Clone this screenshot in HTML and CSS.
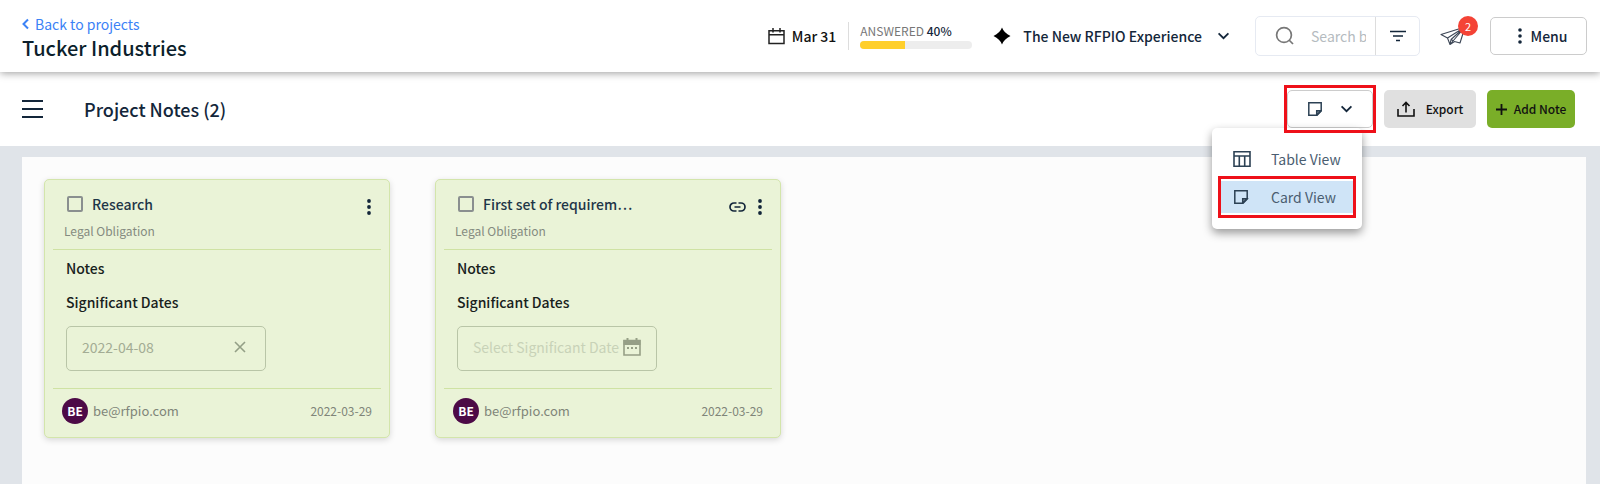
FILE: index.html
```html
<!DOCTYPE html>
<html lang="en">

<head>
    <meta charset="UTF-8">
    <meta name="viewport" content="width=device-width, initial-scale=1.0">
    <title>Tucker Industries - Project Notes</title>
    <link rel="stylesheet" href="styles.css">
</head>

<body>

    <header class="header">
        <div class="project">
            <a href="#" class="back-link">
                <svg width="8" height="12" viewBox="0 0 8 12"><path d="M6 1.5L1.5 6L6 10.5" fill="none" stroke="currentColor" stroke-width="2"/></svg>
                Back to projects
            </a>
            <h1>Tucker Industries</h1>
        </div>

        <div class="header-tools">
            <div class="due-date">
                <svg width="17" height="17" viewBox="0 0 17 17" fill="none" stroke="#222" stroke-width="1.5"><path d="M1 2.8H16V15.5H1ZM1 6.7H16M5 0V4.5M12 0V4.5"/></svg>
                Mar 31
            </div>

            <div class="progress">
                <div class="progress-label">ANSWERED <b>40%</b></div>
                <div class="progress-bar"><div class="progress-fill" style="width: 40%"></div></div>
            </div>

            <button class="experience">
                <svg width="18" height="18" viewBox="0 0 18 18"><path d="M9 0.5Q11 6 17.5 9Q11 12 9 17.5Q7 12 0.5 9Q7 6 9 0.5Z" fill="#000"/></svg>
                <span class="experience-name">The New RFPIO Experience</span>
                <svg width="13" height="8" viewBox="0 0 14 9"><path d="M1.5 1.5L7 7L12.5 1.5" fill="none" stroke="#13263a" stroke-width="2"/></svg>
            </button>

            <div class="search">
                <svg width="20" height="20" viewBox="0 0 20 20" fill="none" stroke="#777" stroke-width="1.7"><circle cx="9" cy="9" r="7.4"/><path d="M14 14L18 18"/></svg>
                <input type="text" placeholder="Search by keyword" aria-label="Search">
                <button class="filter" aria-label="Filter">
                    <svg width="16" height="12" viewBox="0 0 16 12" stroke="#13263a" stroke-width="1.6"><path d="M0 1.5H16M3 6H13M6 10.5H10"/></svg>
                </button>
            </div>

            <button class="inbox" aria-label="Inbox, 2 new">
                <svg width="26" height="20" viewBox="0 0 26 20" fill="none" stroke="#3c4656" stroke-width="1.1" stroke-linejoin="round"><path d="M1 8.5L25 1L20 17L14.5 15.5L10 18.5L7.5 12ZM7.5 12L25 1L10 18.5L11 13.5L14.5 15.5M11 13.5L25 1"/></svg>
                <span class="badge">2</span>
            </button>

            <button class="menu-button">
                <svg width="4" height="16" viewBox="0 0 4 16" fill="#13263a"><circle cx="2" cy="2" r="1.8"/><circle cx="2" cy="8" r="1.8"/><circle cx="2" cy="14" r="1.8"/></svg>
                Menu
            </button>
        </div>
    </header>

    <div class="toolbar">
        <button class="nav-toggle" aria-label="Open navigation">
            <svg width="21" height="18" viewBox="0 0 21 18" stroke="#13263a" stroke-width="2"><path d="M0 1H21M0 9H21M0 17H21"/></svg>
        </button>
        <h2>Project Notes (2)</h2>

        <div class="toolbar-actions">
            <div class="view-switch">
                <button class="view-button" aria-label="Change view">
                    <svg width="14" height="14" viewBox="0 0 14 14" fill="none" stroke="#2c4154" stroke-width="1.5"><path d="M0.8 0.8H13.2V9L9 13.2H0.8Z"/><path d="M8.7 13V8.7H13Z" fill="#8894a2"/></svg>
                    <svg width="13" height="8" viewBox="0 0 14 9"><path d="M1.5 1.5L7 7L12.5 1.5" fill="none" stroke="#13263a" stroke-width="2"/></svg>
                </button>
                <div class="view-menu">
                    <button class="view-option">
                        <svg width="18" height="16" viewBox="0 0 18 16" fill="none" stroke="#2c4154" stroke-width="1.6"><path d="M1 0.8H17V15.2H1ZM1 5H17M6.3 5V15M11.7 5V15"/></svg>
                        Table View
                    </button>
                    <button class="view-option selected">
                        <svg width="18" height="14" viewBox="-1 0 18 14" fill="none" stroke="#2c4154" stroke-width="1.5"><path d="M0.8 0.8H13.2V9L9 13.2H0.8Z"/><path d="M8.7 13V8.7H13Z" fill="#8894a2"/></svg>
                        Card View
                    </button>
                </div>
            </div>
            <button class="export-button">
                <svg width="18" height="16" viewBox="0 0 18 16" fill="none" stroke="#111" stroke-width="1.6"><path d="M1 8V15H17V8M9 11.5V2M5.5 5L9 1.5L12.5 5"/></svg>
                Export
            </button>
            <button class="add-button">
                <svg width="11" height="11" viewBox="0 0 11 11" stroke="#111" stroke-width="1.8"><path d="M5.5 0V11M0 5.5H11"/></svg>
                Add Note
            </button>
        </div>
    </div>

    <main class="notes">
        <article class="card">
            <div class="card-header">
                <div class="card-title">
                    <input type="checkbox" id="note1">
                    <label for="note1">Research</label>
                    <div class="card-icons">
                        <button aria-label="More options">
                            <svg width="4" height="16" viewBox="0 0 4 16" fill="#13263a"><circle cx="2" cy="2" r="1.9"/><circle cx="2" cy="8" r="1.9"/><circle cx="2" cy="14" r="1.9"/></svg>
                        </button>
                    </div>
                </div>
                <div class="card-type">Legal Obligation</div>
            </div>
            <div class="card-body">
                <h3>Notes</h3>
                <h3><label for="date1">Significant Dates</label></h3>
                <div class="date-field">
                    <input type="text" id="date1" value="2022-04-08">
                    <button class="clear" aria-label="Clear date">
                        <svg width="12" height="12" viewBox="0 0 12 12" stroke="#939f86" stroke-width="1.6"><path d="M1 1L11 11M11 1L1 11"/></svg>
                    </button>
                </div>
            </div>
            <div class="card-footer">
                <span class="avatar">BE</span>
                <span>be@rfpio.com</span>
                <time>2022-03-29</time>
            </div>
        </article>

        <article class="card">
            <div class="card-header">
                <div class="card-title">
                    <input type="checkbox" id="note2">
                    <label for="note2">First set of requirem…</label>
                    <div class="card-icons">
                        <button aria-label="Copy link">
                            <svg width="17" height="10" viewBox="0 0 17 10" fill="none" stroke="#13263a" stroke-width="1.7"><path d="M7.5 1H5A4 4 0 0 0 5 9H7.5M9.5 1H12A4 4 0 0 1 12 9H9.5M5.5 5H11.5"/></svg>
                        </button>
                        <button aria-label="More options">
                            <svg width="4" height="16" viewBox="0 0 4 16" fill="#13263a"><circle cx="2" cy="2" r="1.9"/><circle cx="2" cy="8" r="1.9"/><circle cx="2" cy="14" r="1.9"/></svg>
                        </button>
                    </div>
                </div>
                <div class="card-type">Legal Obligation</div>
            </div>
            <div class="card-body">
                <h3>Notes</h3>
                <h3><label for="date2">Significant Dates</label></h3>
                <div class="date-field">
                    <input type="text" id="date2" placeholder="Select Significant Date">
                    <button aria-label="Open calendar">
                        <svg width="18" height="18" viewBox="0 0 18 18"><path d="M1 2.5H17V17H1Z" fill="none" stroke="#969f86" stroke-width="1.6"/><path d="M0.5 2H17.5V7H0.5ZM3.5 0H5.5V3H3.5ZM12.5 0H14.5V3H12.5ZM4 9H6V11H4ZM8 9H10V11H8ZM12 9H14V11H12Z" fill="#969f86"/></svg>
                    </button>
                </div>
            </div>
            <div class="card-footer">
                <span class="avatar">BE</span>
                <span>be@rfpio.com</span>
                <time>2022-03-29</time>
            </div>
        </article>
    </main>

</body>

</html>
```
FILE: styles.css
```css
* {
    box-sizing: border-box;
}

body {
    font-family: "Noto Sans CJK JP", "Noto Sans", sans-serif;
    font-size: 14px;
    line-height: 20px;
    margin: 0;
    min-height: 100vh;
    display: flex;
    flex-direction: column;
    background-color: #e0e4e9;
    color: #13263a;
}

h1, h2, h3 {
    margin: 0;
    font-weight: 500;
}

button, input {
    font: inherit;
    color: inherit;
}

button {
    display: flex;
    align-items: center;
    padding: 0;
    border: none;
    background: none;
    cursor: pointer;
}

svg {
    display: block;
    flex-shrink: 0;
}

/* Header */
.header {
    display: flex;
    justify-content: space-between;
    align-items: center;
    height: 72px;
    padding: 0 13px 0 22px;
    background-color: #fff;
    box-shadow: 0 1px 8px rgba(0, 0, 0, 0.4);
    z-index: 2;
}

.project {
    padding-top: 4px;
}

.back-link {
    display: flex;
    align-items: center;
    gap: 5px;
    color: #3b82f6;
    text-decoration: none;
}

h1 {
    font-size: 20px;
    line-height: 28px;
    color: #0c1f2c;
}

.header-tools {
    display: flex;
    align-items: center;
}

.due-date {
    display: flex;
    align-items: center;
    gap: 7px;
    height: 28px;
    padding-right: 12px;
    border-right: 1px solid #ddd;
    font-weight: 500;
    color: #111;
}

.progress {
    width: 112px;
    margin: 0 21px 0 11px;
}

.progress-label {
    padding-bottom: 2px;
    font-size: 12px;
    line-height: 16px;
    color: #777;
}

.progress-label b {
    font-weight: 500;
    color: #13263a;
}

.progress-bar {
    height: 8px;
    border-radius: 4px;
    background-color: #ededed;
    overflow: hidden;
}

.progress-fill {
    height: 100%;
    background-color: #ffcf2b;
}

.experience {
    gap: 12px;
    margin-right: 25px;
    font-weight: 500;
}

.experience-name {
    padding-right: 3px;
}

.search {
    display: flex;
    align-items: center;
    height: 40px;
    padding-left: 19px;
    border: 1px solid #e6eaf2;
    border-radius: 5px;
}

.search input {
    width: 55px;
    margin: 0 9px 0 16px;
    padding: 0;
    border: none;
    outline: none;
}

.search input::placeholder {
    color: #b5bbc0;
}

.filter {
    justify-content: center;
    height: 100%;
    width: 44px;
    border-left: 1px solid #ddd;
}

.inbox {
    position: relative;
    margin: 0 24px 0 20px;
}

.badge {
    position: absolute;
    left: 18px;
    top: -10px;
    width: 20px;
    height: 20px;
    border-radius: 50%;
    background-color: #f44336;
    color: #fff;
    font-size: 11px;
    text-align: center;
}

.menu-button {
    justify-content: center;
    gap: 9px;
    width: 97px;
    height: 38px;
    padding-left: 8px;
    border: 1px solid #ccc;
    border-radius: 5px;
    font-weight: 500;
}

/* Toolbar */
.toolbar {
    display: flex;
    align-items: center;
    height: 74px;
    padding: 0 25px 0 22px;
    background-color: #fff;
    z-index: 1;
}

h2 {
    margin-left: 41px;
    font-size: 18px;
    line-height: 28px;
}

.toolbar-actions {
    display: flex;
    gap: 11px;
    margin-left: auto;
}

.toolbar-actions > button {
    justify-content: center;
    height: 38px;
    border-radius: 5px;
    font-size: 12px;
    font-weight: 500;
    color: #111;
}

.view-switch {
    position: relative;
}

/* red highlight boxes */
.view-switch::after,
.view-option.selected::after {
    content: "";
    position: absolute;
    inset: -5px -3px;
    border: 3px solid #ee1019;
    pointer-events: none;
}

.view-button {
    justify-content: center;
    gap: 18px;
    width: 86px;
    height: 38px;
    border: 1px solid #ccc;
    border-radius: 5px;
}

.view-menu {
    position: absolute;
    top: 38px;
    right: 11px;
    width: 150px;
    padding: 15px 9px 16px;
    border-radius: 5px;
    background-color: #fff;
    box-shadow: 0 4px 10px rgba(0, 0, 0, 0.4);
}

.view-option {
    position: relative;
    gap: 20px;
    width: 100%;
    height: 32px;
    padding-left: 12px;
    color: #4a5d70;
}

.view-option + .view-option {
    margin-top: 6px;
}

.view-option.selected {
    background-color: #cfe4f7;
}

.toolbar-actions .export-button {
    gap: 11px;
    width: 92px;
    background-color: #e0e0e0;
}

.toolbar-actions .add-button {
    gap: 7px;
    width: 88px;
    background-color: #7aae28;
}

/* Notes */
.notes {
    flex: 1;
    display: flex;
    align-items: flex-start;
    gap: 45px;
    margin: 11px 14px 0 22px;
    padding: 22px;
    background-color: #fcfcfc;
}

.card {
    width: 346px;
    padding: 0 8px;
    border: 1px solid #d3e5ab;
    border-radius: 5px;
    background-color: #eaf3d7;
    box-shadow: 0 2px 6px rgba(0, 0, 0, 0.15);
}

.card-header {
    height: 70px;
    padding: 13px 10px 0 11px;
    border-bottom: 1px solid #cfe2a3;
}

.card-title {
    display: flex;
    align-items: center;
    height: 22px;
    font-weight: 500;
    color: #1f3648;
}

.card-title input {
    appearance: none;
    width: 16px;
    height: 16px;
    margin: 0 9px 0 3px;
    border: 2px solid #8a8f8f;
    border-radius: 2px;
}

.card-icons {
    display: flex;
    align-items: center;
    gap: 12px;
    margin: 6px 0 0 auto;
}

.card-type {
    margin-top: 7px;
    font-size: 12px;
    line-height: 18px;
    color: #858b80;
}

.card-body {
    height: 139px;
    padding: 8px 13px 0;
    border-bottom: 1px solid #cfe2a3;
}

h3 {
    margin-bottom: 14px;
    font-size: 14px;
    line-height: 20px;
    color: #18211c;
}

.date-field {
    display: flex;
    align-items: center;
    justify-content: space-between;
    width: 200px;
    height: 45px;
    padding: 0 15px 4px 15px;
    border: 1px solid #b9c5a7;
    border-radius: 5px;
}

.date-field input {
    flex: 1;
    min-width: 0;
    padding: 0;
    border: none;
    outline: none;
    background: none;
    color: #a3ac94;
}

.date-field input::placeholder {
    color: #c8d2b7;
}

.date-field .clear {
    margin-right: 4px;
}

.card-footer {
    display: flex;
    align-items: center;
    height: 48px;
    padding: 0 9px 4px;
    font-size: 13px;
    color: #808579;
}

.avatar {
    width: 26px;
    height: 26px;
    margin-right: 5px;
    border-radius: 50%;
    background-color: #4d0a47;
    color: #fff;
    font-size: 12px;
    line-height: 26px;
    font-weight: 700;
    text-align: center;
}

.card-footer time {
    margin-left: auto;
    font-size: 12px;
}
```
